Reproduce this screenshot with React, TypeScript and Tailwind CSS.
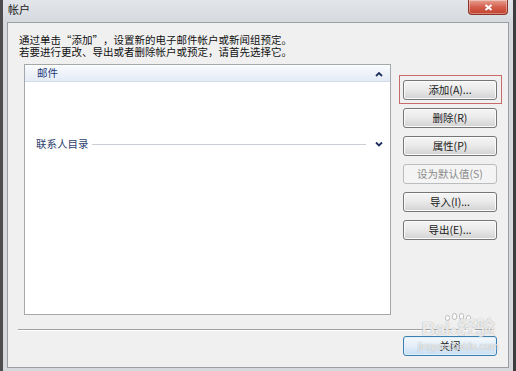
import React from "react";

const font = { fontFamily: '"Noto Sans CJK SC", "Noto Sans", sans-serif' };

function Btn({ label, disabled }: { label: string; disabled?: boolean }) {
  return (
    <div
      className={
        "w-[94px] h-[20px] rounded-[3px] border flex items-center justify-center text-[10.5px] leading-none " +
        (disabled
          ? "border-[#b9bdc0] bg-[#f4f4f4] text-[#8a8a8a]"
          : "border-[#767676] bg-gradient-to-b from-[#f6f6f6] via-[#e9e9e9] to-[#d2d2d2] text-[#1a1a1a] shadow-[inset_0_0_0_1px_#fbfbfb]")
      }
    >
      {label}
    </div>
  );
}

function Chevron({ up }: { up?: boolean }) {
  return (
    <svg width="8" height="6" viewBox="0 0 8 6" className="shrink-0">
      <path
        d={up ? "M1 5 L4 2 L7 5" : "M1 1.5 L4 4.5 L7 1.5"}
        fill="none"
        stroke="#1e2f5c"
        strokeWidth="1.8"
      />
    </svg>
  );
}

export default function App() {
  return (
    <div
      lang="zh-CN"
      className="w-[516px] h-[371px] overflow-hidden bg-[#d5d9de] flex flex-col relative"
      style={font}
    >
      {/* title bar */}
      <div className="h-[22px] shrink-0 flex items-start bg-gradient-to-b from-[#e2e5e9] to-[#d6dade] border-l-[3px] border-l-[#4d4d4d] border-r-[3px] border-r-[#3d3d3d]">
        <div className="pl-[5px] pt-[4px] text-[11px] leading-none text-[#222]">帐户</div>
        <div className="flex-1" />
        <div className="w-[40px] h-[15px] mr-[5px] rounded-b-[4px] border border-t-0 border-[#8b3528] bg-gradient-to-b from-[#e7a091] via-[#d45f4d] to-[#c2402f] flex items-center justify-center shadow-[inset_0_0_0_1px_rgba(255,255,255,0.35)]">
          <svg width="9" height="7" viewBox="0 0 9 7">
            <path d="M1.5 1 L7.5 6 M7.5 1 L1.5 6" stroke="#fff" strokeWidth="2" />
          </svg>
        </div>
      </div>
      {/* body with frame */}
      <div className="flex-1 flex border-l-[3px] border-l-[#4d4d4d] border-r-[3px] border-r-[#3d3d3d] pb-[3px]">
        <div className="ml-[4px] mr-[4px] flex-1 border border-[#9a9ea3] bg-[#f0f0f0] flex flex-col relative">
          <div className="pl-[11px] pt-[11px] text-[#111] flex flex-col">
            <div className="h-[12px] text-[10.5px] leading-[12px] whitespace-nowrap">
              通过单击<span className="inline-block w-[10.5px] text-right">“</span>添加<span className="inline-block w-[10.5px] text-left">”</span>，设置新的电子邮件帐户或新闻组预定。
            </div>
            <div className="h-[12px] text-[10.5px] leading-[12px] whitespace-nowrap">若要进行更改、导出或者删除帐户或预定，请首先选择它。</div>
          </div>
          <div className="flex mt-[6px] ml-[16px]">
            {/* list box */}
            <div className="w-[367px] h-[251px] border border-[#a5a8ab] bg-white flex flex-col">
              <div className="h-[17px] flex items-center pl-[12px] pr-[7px] bg-gradient-to-b from-[#f8fafd] to-[#e4ebf5] border-b border-[#d3dcea] border-t border-t-white">
                <span className="text-[10.5px] leading-none text-[#1e3a7a]">邮件</span>
                <div className="flex-1" />
                <Chevron up />
              </div>
              <div className="h-[57px]" />
              <div className="flex items-center pl-[11px] pr-[7px] gap-[3px]">
                <span className="text-[10.5px] leading-none text-[#2c3f6c]">联系人目录</span>
                <div className="flex-1 h-px bg-[#c9cdd4] mr-[6px]" />
                <Chevron />
              </div>
            </div>
            {/* buttons */}
            <div className="ml-[12px] pt-[16px] flex flex-col gap-[8px] relative">
              <div className="absolute left-[-4px] top-[11px] w-[103px] h-[29px] border border-[#c96a6a]" />
              <Btn label="添加(A)..." />
              <Btn label="删除(R)" />
              <Btn label="属性(P)" />
              <Btn label="设为默认值(S)" disabled />
              <Btn label="导入(I)..." />
              <Btn label="导出(E)..." />
            </div>
          </div>
          {/* separator */}
          <div className="mt-[14px] ml-[10px] w-[476px] h-[2px] border-t border-[#a0a0a0] border-b border-b-white" />
          <div className="mt-[5px] ml-[395px]">
            <div className="w-[94px] h-[20px] rounded-[3px] border border-[#3c7fb1] bg-gradient-to-b from-[#f3f8fc] via-[#e4eef8] to-[#c9dff2] shadow-[inset_0_0_0_1px_#dff0fb] flex items-center justify-center text-[10.5px] leading-none text-[#1a1a1a]">
              关闭
            </div>
          </div>
          {/* watermark */}
          <div className="absolute left-[400px] top-[292px] w-[100px] pointer-events-none flex flex-col items-center text-white/80 [text-shadow:0_0_1px_rgba(120,120,120,0.8)]">
            <div className="flex gap-[2px] mb-[-2px]">
              <span className="w-[5px] h-[6px] rounded-full bg-white/80 border border-[#bbb]" />
              <span className="w-[5px] h-[7px] rounded-full bg-white/80 border border-[#bbb] mt-[-2px]" />
              <span className="w-[5px] h-[7px] rounded-full bg-white/80 border border-[#bbb] mt-[-2px]" />
              <span className="w-[5px] h-[6px] rounded-full bg-white/80 border border-[#bbb]" />
            </div>
            <div className="text-[19px] leading-[20px] font-bold tracking-tight" style={{ fontFamily: '"Liberation Sans", "Noto Sans CJK SC", sans-serif' }}>
              Bai<span className="text-[14px]">●</span>经验
            </div>
            <div className="text-[10px] leading-[10px] mt-[2px]" style={{ fontFamily: '"Liberation Sans", sans-serif' }}>
              jingyan.baidu.com
            </div>
          </div>
        </div>
      </div>
    </div>
  );
}
